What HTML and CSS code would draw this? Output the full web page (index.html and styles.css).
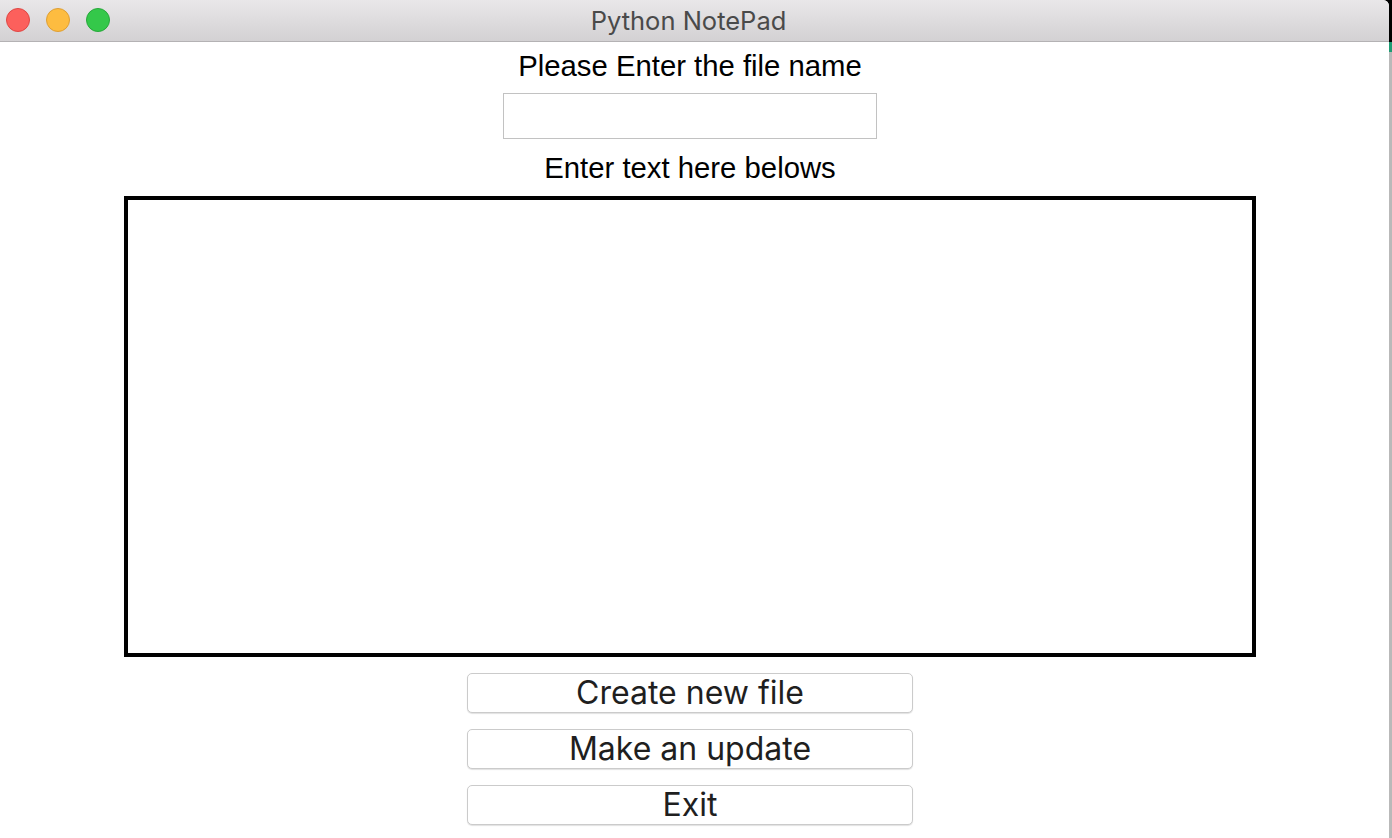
FILE: index.html
```html
<!DOCTYPE html>
<html>
<head>
<meta charset="utf-8">
<title>Python NotePad</title>
<link rel="stylesheet" href="styles.css">
</head>
<body>
<div class="screen">
  <div class="window">
    <div class="titlebar">
      <div class="lights">
        <span class="light red"></span>
        <span class="light yellow"></span>
        <span class="light green"></span>
      </div>
      <div class="title">Python NotePad</div>
    </div>
    <div class="content">
      <div class="label">Please Enter the file name</div>
      <input class="filename" type="text">
      <div class="label label-text">Enter text here belows</div>
      <textarea class="editor"></textarea>
      <div class="buttons">
        <button class="btn">Create new file</button>
        <button class="btn">Make an update</button>
        <button class="btn">Exit</button>
      </div>
    </div>
  </div>
  <div class="edge"></div>
</div>
</body>
</html>
```
FILE: styles.css
```css
html, body {
  margin: 0;
  padding: 0;
  background: #ffffff;
}
.screen {
  display: flex;
  width: 1392px;
  height: 838px;
  overflow: hidden;
  background: #000;
}
.window {
  width: 1389px;
  height: 838px;
  display: flex;
  flex-direction: column;
  background: #ffffff;
  border-top-right-radius: 6px;
  overflow: hidden;
}
.edge {
  width: 3px;
  height: 838px;
  background: linear-gradient(to bottom, #000 0, #000 42px, #1f9c74 42px, #1f9c74 52px, #b9b9b9 52px, #b9b9b9 100%);
}
.titlebar {
  position: relative;
  height: 41px;
  flex: none;
  border-bottom: 1px solid #b4b2b4;
  background: linear-gradient(to bottom, #e9e7e9, #d3d1d3);
  display: flex;
  align-items: center;
  justify-content: center;
  padding-right: 12px;
}
.lights {
  position: absolute;
  left: 6px;
  top: 8px;
  display: flex;
  gap: 16px;
}
.light {
  width: 22px;
  height: 22px;
  border-radius: 50%;
  border: 1px solid;
}
.red { background: #fc605c; border-color: #df4744; }
.yellow { background: #fdbc40; border-color: #de9f34; }
.green { background: #34c84a; border-color: #27a83a; }
.title {
  font-family: "Inter", "Roboto", "Liberation Sans", sans-serif;
  font-size: 25.5px;
  color: #4a4a4a;
  line-height: 30px;
  margin-top: 1px;
}
.content {
  width: 1380px;
  display: flex;
  flex-direction: column;
  align-items: center;
  padding-top: 7px;
}
.label {
  font-family: "Liberation Sans", Arial, sans-serif;
  font-size: 29.3px;
  line-height: 34px;
  color: #000;
}
.filename {
  margin-top: 10px;
  width: 374px;
  height: 46px;
  box-sizing: border-box;
  border: 1px solid #c2c2c2;
  background: #fff;
  padding: 0 6px;
  outline: none;
}
.label-text {
  margin-top: 12px;
}
.editor {
  margin-top: 11px;
  width: 1132px;
  height: 461px;
  box-sizing: border-box;
  border: 4px solid #000;
  resize: none;
  outline: none;
  padding: 0;
  background: #fff;
}
.buttons {
  margin-top: 16px;
  display: flex;
  flex-direction: column;
  gap: 16px;
}
.btn {
  width: 446px;
  height: 40px;
  box-sizing: border-box;
  background: #fff;
  border: 1px solid #cbcbcb;
  border-radius: 5px;
  box-shadow: 0 1px 1px rgba(0, 0, 0, 0.12);
  font-family: "Inter", "Roboto", "Liberation Sans", sans-serif;
  font-size: 32px;
  line-height: 36px;
  color: #1f1f1f;
  padding: 0;
}
```
